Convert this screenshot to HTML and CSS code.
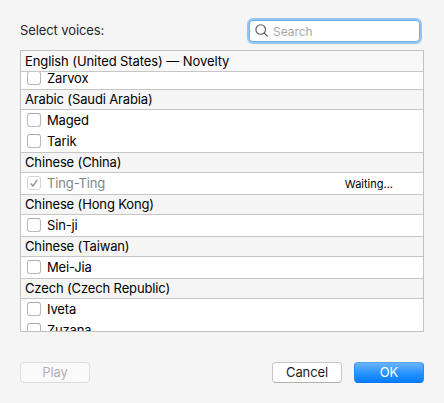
FILE: index.html
```html
<!DOCTYPE html>
<html lang="en">
<head>
<meta charset="utf-8">
<title>Select voices</title>
<link rel="stylesheet" href="styles.css">
</head>
<body>
<main class="dialog">
  <header class="top">
    <span class="title">Select voices:</span>
    <div class="search">
      <svg class="lens" viewBox="0 0 14 14"><circle cx="5.7" cy="5.5" r="4.8"/><path d="M9.1 8.9 12.6 12.4"/></svg>
      <span>Search</span>
    </div>
  </header>
  <section class="list">
    <h2 class="group pinned">English (United States) — Novelty</h2>
    <div class="row partial"><i class="box"></i><span>Zarvox</span></div>
    <h2 class="group">Arabic (Saudi Arabia)</h2>
    <div class="row"><i class="box"></i><span>Maged</span></div>
    <div class="row"><i class="box"></i><span>Tarik</span></div>
    <h2 class="group">Chinese (China)</h2>
    <div class="row disabled"><i class="box"><svg viewBox="0 0 12 12"><path d="M2.8 6.5 5 9 9.2 2.9"/></svg></i><span>Ting-Ting</span><span class="status">Waiting...</span></div>
    <h2 class="group">Chinese (Hong Kong)</h2>
    <div class="row"><i class="box"></i><span>Sin-ji</span></div>
    <h2 class="group">Chinese (Taiwan)</h2>
    <div class="row"><i class="box"></i><span>Mei-Jia</span></div>
    <h2 class="group">Czech (Czech Republic)</h2>
    <div class="row"><i class="box"></i><span>Iveta</span></div>
    <div class="row"><i class="box"></i><span>Zuzana</span></div>
  </section>
  <footer class="actions">
    <button class="btn play" disabled>Play</button>
    <button class="btn cancel">Cancel</button>
    <button class="btn ok">OK</button>
  </footer>
</main>
</body>
</html>
```
FILE: styles.css
```css
* { box-sizing: border-box; }
body {
  margin: 0;
  background: #f5f5f5;
  color: #000;
  font: 13px/20px Inter, "Liberation Sans", sans-serif;
  letter-spacing: -0.14px;
  overflow: hidden;
}
.dialog {
  width: 444px;
  height: 403px;
  padding: 18px 20px 0;
}
.top {
  display: flex;
  justify-content: space-between;
  height: 32px;
}
.title { padding-top: 2px; color: #262626; letter-spacing: -0.1px; }
.search {
  display: flex;
  align-items: center;
  width: 175px;
  height: 26px;
  margin-right: 2px;
  padding: 0 0 0 6px;
  border: 2px solid #93c5f1;
  border-radius: 6px;
  background: #fff;
  box-shadow: inset 0 0 0 1px #70ade3;
  color: #a9a9a9;
  font-size: 12px;
}
.search span { padding-top: 1px; letter-spacing: -0.05px; }
.lens {
  width: 14px;
  height: 14px;
  margin-right: 4px;
  fill: none;
  stroke: #555;
  stroke-width: 1.1;
}
.list {
  height: 282px;
  border: 1px solid #c1c1c1;
  background: #fff;
  overflow: hidden;
}
.group {
  height: 21px;
  margin: 0;
  padding-left: 4px;
  border: solid #c6c6c6;
  border-width: 1px 0;
  background: #f5f5f5;
  font-size: 13px;
  font-weight: 400;
  line-height: 19px;
}
.pinned { border-top: 0; background: #f8f8f8; line-height: 21px; letter-spacing: -0.09px; }
.row {
  display: flex;
  height: 21px;
  padding: 3px 30px 0 6px;
}
.row span { line-height: 14px; }
.partial { height: 17px; padding-top: 0; overflow: hidden; }
.partial .box { margin-top: -1px; }
.partial span { margin-top: -1px; }
.box {
  flex: none;
  width: 14px;
  height: 14px;
  margin-right: 6px;
  border: 1px solid #b9b9b9;
  border-top-color: #a9a9a9;
  border-radius: 3px;
  background: #fff;
}
.box svg { display: block; width: 12px; height: 12px; fill: none; stroke: #999; stroke-width: 1.5; }
.disabled { color: #858585; }
.disabled .box { border-color: #d5d5d5; }
.row .status { margin-left: auto; color: #000; font-size: 11px; line-height: 17px; letter-spacing: 0; }
.actions { display: flex; padding-top: 30px; }
.btn {
  width: 70px;
  height: 21px;
  padding: 0;
  border: 1px solid #c7c7c7;
  border-bottom-color: #b0b0b0;
  border-radius: 4px;
  background: #fff;
  color: #1c1c1c;
  font: inherit;
  letter-spacing: -0.14px;
  line-height: 19px;
}
.play { border-color: #dedede; background: #fafafa; color: #b1b1b1; }
.cancel { margin-left: auto; }
.ok {
  margin-left: 12px;
  border-color: #52a4f1 #258cf4 #0473ee;
  background: linear-gradient(#6bb3fa, #1f90fd 60%, #077dff);
  color: #fff;
}
```
